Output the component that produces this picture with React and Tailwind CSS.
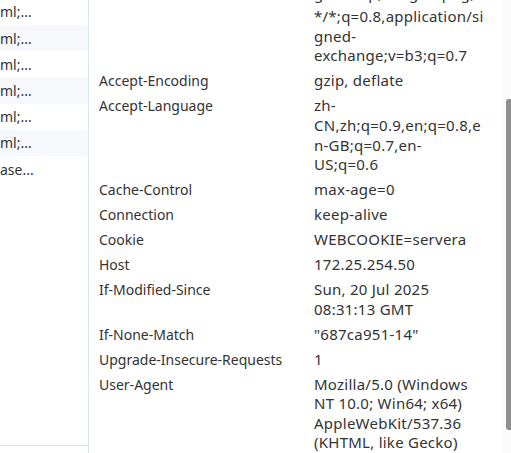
import React from "react";

const leftRows = ["ml;...", "ml;...", "ml;...", "ml;...", "ml;...", "ml;...", "ase..."];

const headers = [
  { name: "", lines: ["ge/webp,image/apng,", "*/*;q=0.8,application/si", "gned-", "exchange;v=b3;q=0.7"] },
  { name: "Accept-Encoding", lines: ["gzip, deflate"] },
  { name: "Accept-Language", lines: ["zh-", "CN,zh;q=0.9,en;q=0.8,e", "n-GB;q=0.7,en-", "US;q=0.6"] },
  { name: "Cache-Control", lines: ["max-age=0"] },
  { name: "Connection", lines: ["keep-alive"] },
  { name: "Cookie", lines: ["WEBCOOKIE=servera"] },
  { name: "Host", lines: ["172.25.254.50"] },
  { name: "If-Modified-Since", lines: ["Sun, 20 Jul 2025", "08:31:13 GMT"] },
  { name: "If-None-Match", lines: ['"687ca951-14"'] },
  { name: "Upgrade-Insecure-Requests", lines: ["1"] },
  { name: "User-Agent", lines: ["Mozilla/5.0 (Windows", "NT 10.0; Win64; x64)", "AppleWebKit/537.36", "(KHTML, like Gecko)"] },
];

export default function App() {
  return (
    <div
      className="flex w-[511px] h-[453px] overflow-hidden bg-white text-[#333333] text-[14px]"
      style={{ fontFamily: '"Noto Sans", "Noto Sans CJK SC", sans-serif' }}
    >
      <div className="w-[89px] shrink-0 flex flex-col border-r border-[#d9e6f6]">
        <div className="flex flex-col mt-[-1.2px]">
          {leftRows.map((t, i) => (
            <div
              key={i}
              className={`h-[26.2px] flex items-center whitespace-nowrap pl-0 ${i % 2 === 1 ? "bg-[#f6f8fc]" : "bg-white"}`}
            >
              {t}
            </div>
          ))}
        </div>
        <div className="flex-1" />
        <div className="h-[8px] border-t border-[#d9e6f6]" />
      </div>
      <div className="flex-1 min-w-0 pl-[10px] pt-0 overflow-hidden">
        <div className="flex flex-col mt-[-23.4px]">
          {headers.map((h, i) => (
            <div key={i} className="flex py-[2.7px] leading-[19.6px]">
              <div className="w-[215px] shrink-0 whitespace-nowrap">{h.name}</div>
              <div className="flex flex-col whitespace-nowrap text-[15px] tracking-[0.25px]">
                {h.lines.map((l, j) => (
                  <div key={j} className={i === 0 && j === 0 ? "leading-[28px]" : ""}>
                    {l}
                  </div>
                ))}
              </div>
            </div>
          ))}
        </div>
      </div>
      <div className="w-[9px] shrink-0 bg-[#fafafa] flex flex-col">
        <div className="mt-[99px] ml-[4px] w-[5px] h-[331px] bg-[#8f8f8f] rounded-tl-[3px] rounded-bl-[3px]" />
      </div>
    </div>
  );
}
